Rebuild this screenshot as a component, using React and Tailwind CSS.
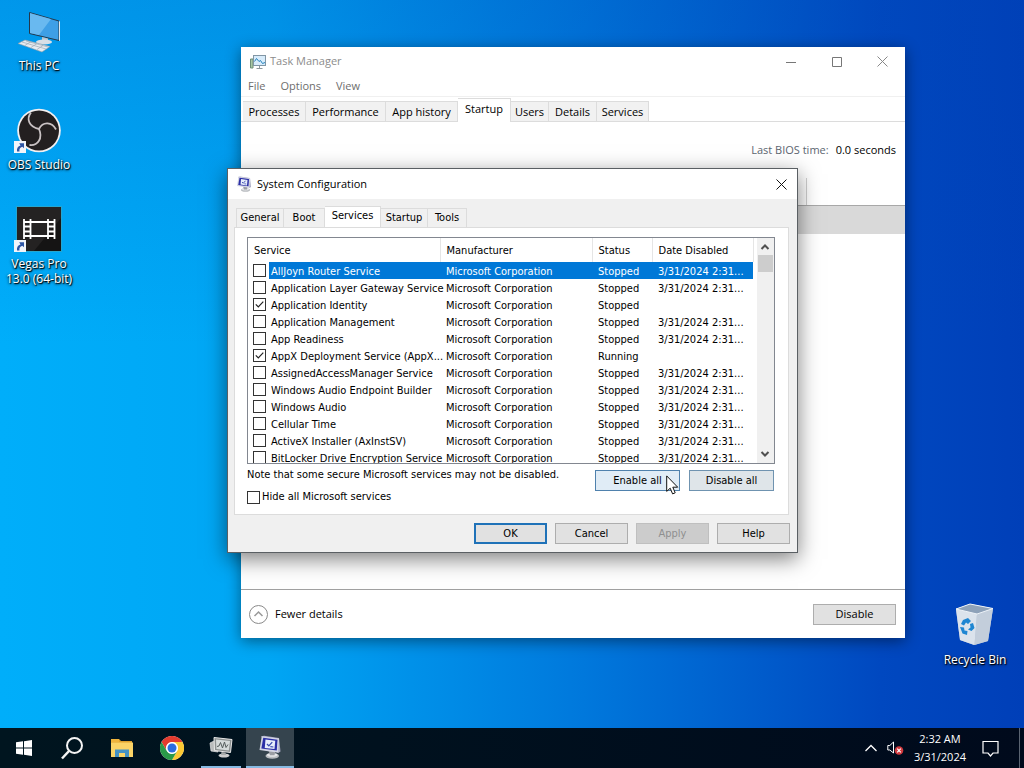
import React from "react";

const services = [
  ["AllJoyn Router Service", "Stopped", true, false],
  ["Application Layer Gateway Service", "Stopped", true, false],
  ["Application Identity", "Stopped", false, true],
  ["Application Management", "Stopped", true, false],
  ["App Readiness", "Stopped", true, false],
  ["AppX Deployment Service (AppX...", "Running", false, true],
  ["AssignedAccessManager Service", "Stopped", true, false],
  ["Windows Audio Endpoint Builder", "Stopped", true, false],
  ["Windows Audio", "Stopped", true, false],
  ["Cellular Time", "Stopped", true, false],
  ["ActiveX Installer (AxInstSV)", "Stopped", true, false],
  ["BitLocker Drive Encryption Service", "Stopped", true, false],
];

function CheckBox({ id, checked = false, label }) {
  return (
    <span className="grid size-[13px] shrink-0">
      <input
        id={id}
        type="checkbox"
        defaultChecked={checked}
        aria-label={label}
        className="peer col-start-1 row-start-1 size-[13px] appearance-none border border-[#333] bg-white"
      />
      <svg
        viewBox="0 0 13 13"
        className="pointer-events-none invisible col-start-1 row-start-1 size-[13px] peer-checked:visible"
        fill="none"
        stroke="#222"
        strokeWidth="1.2"
      >
        <path d="M2.8 6.4 5.3 9 10.3 3.6" />
      </svg>
    </span>
  );
}

function MonitorIcon({ className }) {
  return (
    <svg viewBox="0 0 32 32" className={className}>
      <ellipse cx="19" cy="28" rx="9" ry="3.6" fill="#b9bcc0" />
      <ellipse cx="19" cy="26.500" rx="7" ry="2.4" fill="#e6e7e9" />
      <path d="M14 21l9 1-1 5h-6z" fill="#9a9da3" />
      <path d="M4 2l4-1 20 3 2 18-3 2z" fill="#a9abc4" />
      <path d="M5 1.500l23 3-1 19L2 20z" fill="#d3d5e4" />
      <path d="M7 3.500l19 2.700-1 14.500L4.500 18z" fill="#2b2fa6" />
      <path d="M10 6l13 1.800-1 11-13-1.600z" fill="#e8eefb" />
      <path d="M12 12l2.500 2.500L19 9.500" fill="none" stroke="#3a4bb0" strokeWidth="1.800" />
      <path d="M16.500 15.500l4 .5" stroke="#3a4bb0" strokeWidth="1.500" />
    </svg>
  );
}

function PerfIcon({ className }) {
  return (
    <svg viewBox="0 0 18 16" className={className} fill="none">
      <path d="M1.500 5h2.500v9H1.500z" fill="#a9c7a4" stroke="#6f8f78" />
      <rect x="4.500" y="1.500" width="12" height="10" fill="#d8ecfb" stroke="#8196a5" />
      <path d="M5.500 7.500l2-3 2.500 3 1.500-1 2 3 2.500-1" stroke="#2583bd" />
      <path d="M10.500 12v2M7.500 14.500h6" stroke="#8e979d" />
    </svg>
  );
}

function PerfTaskbarIcon({ className }) {
  return (
    <svg viewBox="0 0 24 24" className={className} fill="none">
      <ellipse cx="15" cy="20.500" rx="5.500" ry="2" fill="#cfcfcf" />
      <path d="M1 8l6-3 2 12-7-1z" fill="#b9bcbc" stroke="#e6e6e6" strokeWidth=".7" />
      <path d="M5 2.500l18 2-1.500 13L5.500 15.500z" fill="#8c9191" stroke="#e9e9e9" />
      <path d="M7 4.500l14 1.600-1.200 9.400L7.400 14z" fill="#d5dada" />
      <path d="M8 11.500l2-.5 1.500-3.500 2 5.500 2-6 1.500 5.500 2-3" stroke="#555d5d" />
      <path d="M12.500 17l4 .4.500 2.600h-5z" fill="#a9acac" />
    </svg>
  );
}

function ShortcutArrow() {
  return (
    <svg viewBox="0 0 12 12" className="absolute bottom-0 -left-0.5 size-3">
      <rect width="12" height="12" fill="#f2f5fa" />
      <path d="M3 10.500C2.500 7 4 5 6.500 4.500L5.200 2.200H10v5L8.300 5.800C6 6.500 5 8 5.500 10.500z" fill="#2d55a5" />
    </svg>
  );
}

function DesktopIcon({ className, label, children }) {
  return (
    <button
      type="button"
      className={
        "absolute flex w-[76px] flex-col items-center gap-1 text-center text-xs leading-[15px] text-white [text-shadow:1px_1px_1px_#000,0_1px_3px_#000] " +
        className
      }
    >
      <span className="relative block">{children}</span>
      <span>{label}</span>
    </button>
  );
}

const tmTabs = [
  ["Processes", "w-[63px]"],
  ["Performance", "w-20"],
  ["App history", "w-[72px]"],
  ["Startup", "w-[53px]"],
  ["Users", "w-[38px]"],
  ["Details", "w-12"],
  ["Services", "w-[52px]"],
];

const scTabs = [
  ["General", "w-12"],
  ["Boot", "w-[41px]"],
  ["Services", "w-14"],
  ["Startup", "w-[47px]"],
  ["Tools", "w-[39px]"],
];

function TaskManager() {
  return (
    <section className="absolute top-[47px] left-[241px] flex h-[591px] w-[664px] flex-col bg-white text-[11px] text-black shadow-[0_3px_14px_rgba(0,0,0,0.45)]">
      <header className="flex h-[29px] items-center pl-2 text-[#8c8c8c]">
        <PerfIcon className="h-4 w-[18px]" />
        <h2 className="ml-[3px] grow">Task Manager</h2>
        <button type="button" aria-label="Minimize" className="grid h-full w-[46px] place-items-center">
          <svg viewBox="0 0 10 10" className="size-[10px]" stroke="#777"><path d="M0 5.500h10" /></svg>
        </button>
        <button type="button" aria-label="Maximize" className="grid h-full w-[45px] place-items-center">
          <svg viewBox="0 0 10 10" className="size-[10px]" fill="none" stroke="#777"><path d="M.5.5h9v9h-9z" /></svg>
        </button>
        <button type="button" aria-label="Close" className="grid h-full w-[46px] place-items-center">
          <svg viewBox="0 0 11 11" className="size-[11px]" stroke="#888"><path d="M.5.5l10 10M10.500.5l-10 10" /></svg>
        </button>
      </header>
      <nav className="flex h-[21px] items-center gap-[15px] border-b border-[#f0f0f0] pl-[7px] text-[#6d6d6d]">
        <button type="button">File</button>
        <button type="button">Options</button>
        <button type="button">View</button>
      </nav>
      <div role="tablist" className="flex h-[25px] items-end border-b border-[#dcdcdc] pl-0.5">
        {tmTabs.map(([name, width]) => (
          <button
            key={name}
            type="button"
            role="tab"
            aria-selected={name === "Startup"}
            className={
              "border-t border-r border-[#dcdcdc] whitespace-nowrap " +
              width +
              (name === "Startup" ? " -mb-px h-6 bg-white pb-0.5" : " h-5 bg-[#f1f1f1] pt-px")
            }
          >
            {name}
          </button>
        ))}
      </div>
      <p className="flex h-14 items-center justify-end gap-[7px] pr-[9px]">
        <span className="text-[#5c6670]">Last BIOS time:</span>
        <span>0.0 seconds</span>
      </p>
      <div className="flex h-7 border-b border-[#a8a8a8]">
        <div className="w-[566px] border-r border-[#d0d0d0]" />
      </div>
      <div className="h-7 bg-[#d9d9d9]" />
      <div className="grow" />
      <footer className="flex h-[49px] items-center border-t border-[#a0a0a0] pr-[9px] pl-2">
        <button type="button" className="flex items-center gap-[7px]">
          <svg viewBox="0 0 19 19" className="size-[19px]" fill="none" stroke="#8a8a8a">
            <circle cx="9.500" cy="9.500" r="9" />
            <path d="M5.500 11l4-4 4 4" stroke="#999" strokeWidth="1.500" />
          </svg>
          Fewer details
        </button>
        <button type="button" className="ml-auto h-[21px] w-[83px] border border-[#adadad] bg-[#e1e1e1]">
          Disable
        </button>
      </footer>
    </section>
  );
}

function SystemConfiguration() {
  return (
    <section className="absolute top-[168px] left-[227px] flex w-[571px] flex-col border border-[#5a5f63] bg-[#f0f0f0] font-['DejaVu_Sans_Condensed','DejaVu_Sans',sans-serif] text-[11px] text-black shadow-[0_6px_20px_rgba(0,0,0,0.5)]">
      <header className="flex h-[30px] items-center bg-white pl-2 font-['Open_Sans','Noto_Sans',sans-serif]">
        <MonitorIcon className="size-4" />
        <h2 className="ml-[5px] grow">System Configuration</h2>
        <button type="button" aria-label="Close" className="grid h-full w-[31px] place-items-center">
          <svg viewBox="0 0 11 11" className="size-[11px]" stroke="#111"><path d="M.5.5l10 10M10.500.5l-10 10" /></svg>
        </button>
      </header>
      <div className="flex flex-col pt-[7px] pr-[7px] pb-2 pl-1.5">
        <div role="tablist" className="flex h-[21px] items-end pl-0.5">
          {scTabs.map(([name, width]) => (
            <button
              key={name}
              type="button"
              role="tab"
              aria-selected={name === "Services"}
              className={
                "border-t border-r border-[#dcdcdc] whitespace-nowrap " +
                width +
                (name === "Services" ? " -mb-px h-[22px] bg-white pb-0.5" : " h-[19px] bg-[#f0f0f0] pt-px first:border-l")
              }
            >
              {name}
            </button>
          ))}
        </div>
        <div className="mr-px border border-[#dcdcdc] bg-white pt-[9px] pr-[13px] pb-[7px] pl-3">
          <div className="flex h-[227px] border border-[#828790]">
            <div className="h-[225px] grow overflow-hidden">
              <table className="w-[505px] table-fixed border-collapse text-left">
                <colgroup>
                  <col className="w-[21px]" />
                  <col className="w-[171px]" />
                  <col className="w-[152px]" />
                  <col className="w-[60px]" />
                  <col className="w-[101px]" />
                </colgroup>
                <thead>
                  <tr className="h-6">
                    <th colSpan={2} className="border-r border-[#e5e5e5] p-0 pt-0.5 pl-1.5 font-normal">Service</th>
                    <th className="border-r border-[#e5e5e5] p-0 pt-0.5 pl-1.5 font-normal">Manufacturer</th>
                    <th className="border-r border-[#e5e5e5] p-0 pt-0.5 pl-1.5 font-normal">Status</th>
                    <th className="border-r border-[#e5e5e5] p-0 pt-0.5 pl-1.5 font-normal">Date Disabled</th>
                  </tr>
                </thead>
                <tbody>
                  {services.map(([name, status, dated, checked], i) => {
                    const fill = i === 0 ? " bg-[#0078d7] text-white" : "";
                    return (
                      <tr key={name} className="h-[17px] leading-[15px] whitespace-nowrap">
                        <td className="p-0 pl-[5px]">
                          <CheckBox label={name} checked={checked} />
                        </td>
                        <td className={"p-0 pt-0.5 pl-0.5" + fill}>{name}</td>
                        <td className={"p-0 pt-0.5 pl-1.5" + fill}>Microsoft Corporation</td>
                        <td className={"p-0 pt-0.5 pl-1.5" + fill}>{status}</td>
                        <td className={"p-0 pt-0.5 pl-1.5" + fill}>{dated ? "3/31/2024 2:31..." : ""}</td>
                      </tr>
                    );
                  })}
                </tbody>
              </table>
            </div>
            <div className="flex w-[17px] flex-col items-center bg-[#f0f0f0]">
              <svg viewBox="0 0 17 17" className="size-[17px]" fill="none" stroke="#505050" strokeWidth="2"><path d="M4.500 11L8 7.500 11.500 11" /></svg>
              <div className="h-[17px] w-[15px] bg-[#cdcdcd]" />
              <svg viewBox="0 0 17 17" className="mt-auto size-[17px]" fill="none" stroke="#505050" strokeWidth="2"><path d="M4.500 6L8 9.500 11.500 6" /></svg>
            </div>
          </div>
          <div className="flex justify-between">
            <div className="flex flex-col">
              <p className="h-[22px] leading-[22px]">Note that some secure Microsoft services may not be disabled.</p>
              <div className="mt-0.5 flex h-[19px] items-center gap-0.5">
                <CheckBox id="hide-ms" />
                <label htmlFor="hide-ms">Hide all Microsoft services</label>
              </div>
            </div>
            <div className="mt-1.5 mr-px flex gap-[9px]">
              <button type="button" className="h-[21px] w-[85px] border border-[#4f81ad] bg-[#e0ecf6] pt-px">Enable all</button>
              <button type="button" className="h-[21px] w-[85px] border border-[#6f93b0] bg-[#dfe5e9] pt-px">Disable all</button>
            </div>
          </div>
        </div>
        <div className="mt-2 flex justify-end gap-2">
          <button type="button" className="h-[21px] w-[73px] border-2 border-[#1f72b8] bg-[#e1e1e1] pt-px">OK</button>
          <button type="button" className="h-[21px] w-[73px] border border-[#adadad] bg-[#e1e1e1] pt-px">Cancel</button>
          <button type="button" disabled className="h-[21px] w-[73px] border border-[#bfbfbf] bg-[#cccccc] pt-px text-[#8f8f8f]">Apply</button>
          <button type="button" className="h-[21px] w-[73px] border border-[#adadad] bg-[#e1e1e1] pt-px">Help</button>
        </div>
      </div>
    </section>
  );
}

function Taskbar() {
  return (
    <footer className="flex h-10 items-stretch bg-linear-to-r from-[#00151f] to-[#000a1c] text-white">
      <button type="button" aria-label="Start" className="grid w-12 place-items-center">
        <svg viewBox="0 0 16 16" className="size-4" fill="#fff">
          <path d="M0 2.300L7 1.300V7.500H0zM8 1.200L16 0V7.500H8zM0 8.500H7V14.700L0 13.700zM8 8.500H16V16L8 14.800z" />
        </svg>
      </button>
      <button type="button" aria-label="Search" className="grid w-12 place-items-center">
        <svg viewBox="0 0 24 24" className="size-6" fill="none" stroke="#f4f4f4" strokeWidth="2">
          <circle cx="14.500" cy="9.500" r="7.500" />
          <path d="M9 15l-7 7.500" strokeWidth="2.500" />
        </svg>
      </button>
      <button type="button" aria-label="File Explorer" className="grid w-[52px] place-items-center">
        <svg viewBox="0 0 22 18" className="h-[18px] w-[22px]">
          <path d="M0 0h8l2 2h11v4H0z" fill="#e0a22e" />
          <path d="M0 3.500h22V18H0z" fill="#fbd467" />
          <path d="M0 0h8v3H0z" fill="#f0b43c" />
          <path d="M4 18v-7.500h14V18h-4v-4H8v4z" fill="#4592c3" />
        </svg>
      </button>
      <button type="button" aria-label="Chrome" className="grid w-12 place-items-center">
        <svg viewBox="0 0 48 48" className="size-6">
          <circle cx="24" cy="24" r="24" fill="#fff" />
          <path d="M24 12H44.800A24 24 0 0 0 3.200 12L13.600 30A12 12 0 0 1 24 12z" fill="#e33b2e" />
          <path d="M34.400 30L24 48A24 24 0 0 0 44.800 12H24A12 12 0 0 1 34.400 30z" fill="#fcc934" />
          <path d="M13.600 30L3.200 12A24 24 0 0 0 24 48L34.400 30A12 12 0 0 1 13.600 30z" fill="#2a9a48" />
          <circle cx="24" cy="24" r="11.500" fill="#fff" />
          <circle cx="24" cy="24" r="9" fill="#2b6de0" />
        </svg>
      </button>
      <button type="button" aria-label="Task Manager" className="mx-[5px] grid w-10 place-items-center border-b-2 border-[#86b9e2]">
        <PerfTaskbarIcon className="size-6" />
      </button>
      <button type="button" aria-label="System Configuration" className="grid w-12 place-items-center border-b-2 border-[#86b9e2] bg-[#35444e]">
        <MonitorIcon className="size-6" />
      </button>
      <div className="ml-auto flex items-center">
        <button type="button" aria-label="Show hidden icons" className="mr-[10px]">
          <svg viewBox="0 0 12 8" className="h-2 w-3" fill="none" stroke="#fff" strokeWidth="1.300"><path d="M.5 7L6 1.500 11.500 7" /></svg>
        </button>
        <button type="button" aria-label="Volume muted" className="mr-2.5">
          <svg viewBox="0 0 17 14" className="h-[14px] w-[17px]" fill="none" stroke="#fff">
            <path d="M.8 4.500h2L6.500 1v11L2.800 9h-2z" />
            <circle cx="12" cy="9.500" r="4.300" fill="#d23a3e" stroke="none" />
            <path d="M10.200 7.700l3.600 3.600M13.800 7.700l-3.600 3.600" strokeWidth="1.200" />
          </svg>
        </button>
        <time className="mr-4 text-center text-[11px] leading-[18px]">
          2:32 AM
          <br />
          3/31/2024
        </time>
        <button type="button" aria-label="Notifications" className="mr-5">
          <svg viewBox="0 0 17 17" className="size-[17px]" fill="none" stroke="#fff" strokeWidth="1.200"><path d="M1 1.500h15v11.500H11L8.500 16 6 13H1z" /></svg>
        </button>
        <span className="mr-1 h-10 w-px bg-[#5a6472]" />
      </div>
    </footer>
  );
}

export default function App() {
  return (
    <div className="flex min-h-screen flex-col bg-[linear-gradient(to_bottom,rgba(0,70,180,0.22),transparent_45%),linear-gradient(to_right,#00aefa_0%,#00a6f4_26%,#0078dc_57%,#0048c0_86%,#003fb8_100%)] font-['Open_Sans','Noto_Sans',sans-serif]">
      <main className="relative grow">
        <DesktopIcon className="top-[11px] left-[1px]" label="This PC">
          <svg viewBox="0 0 44 43" className="h-[43px] w-11">
            <path d="M12.500 1.500L42 10v19.500L12.500 22.500z" fill="#3e9fe6" stroke="#23384c" />
            <path d="M13 2L34 8 22 24 13 22z" fill="#7cc4f3" opacity=".7" />
            <path d="M42 10l1 .5v19l-1 .5z" fill="#dfe8ef" />
            <path d="M25 26l6 1.500v4h-6z" fill="#b8c4cf" />
            <ellipse cx="27" cy="31" rx="8" ry="2.500" fill="#d8dfe6" />
            <path d="M1 32.500L8 29l25 6.500-8 5.500z" fill="#e6ebf0" stroke="#8d9aa5" strokeWidth=".6" />
            <path d="M5 31l24 7M9 30l22 6M8 34.500l6-4M14 36.500l6-4M20 38.500l6-4" stroke="#9eabb6" strokeWidth=".7" />
          </svg>
        </DesktopIcon>
        <DesktopIcon className="top-[108px] left-[1px]" label="OBS Studio">
          <svg viewBox="0 0 46 45" className="h-[45px] w-[46px]">
            <circle cx="23" cy="22.500" r="21.800" fill="#f3f0f1" />
            <circle cx="23" cy="22.500" r="20" fill="#231f20" />
            <g fill="none" stroke="#c9c2c4" strokeWidth="1.800">
              <path d="M23 21C13 19 10 11 15 4.500" />
              <path d="M23 21C27 13 36 14 40 21.500" />
              <path d="M23 21C27 30 22 38 13.500 37" />
            </g>
          </svg>
          <ShortcutArrow />
        </DesktopIcon>
        <DesktopIcon className="top-[206px] left-[1px]" label="Vegas Pro 13.0 (64-bit)">
          <svg viewBox="0 0 46 46" className="h-[46px] w-[46px]">
            <rect width="46" height="46" fill="#26a6cf" />
            <rect x="1" y="1" width="44" height="44" fill="#242222" />
            <path d="M45 12v33H18z" fill="#151414" />
            <g fill="none" stroke="#fff" strokeWidth="1.800">
              <path d="M8 13v20M14.500 13v20M32 13v20M38.500 13v20M14 16h18M14 30h18" />
              <path d="M8 16h6M8 20.500h6M8 25.500h6M8 30h6M32 16h6M32 20.500h6M32 25.500h6M32 30h6" />
            </g>
          </svg>
          <ShortcutArrow />
        </DesktopIcon>
        <DesktopIcon className="top-[602px] right-[11px]" label="Recycle Bin">
          <svg viewBox="0 0 40 46" className="h-[46px] w-10">
            <g transform="translate(0 1)">
              <path d="M1 6L15 1l23 4.500L33 38l-14 4L5 37z" fill="#b8c6d8" />
              <path d="M1 6l21 5-2.500 31L5 37z" fill="#dbe3ec" />
              <path d="M22 11L38 5.500 33 38l-13.500 4z" fill="#c3cedb" />
              <path d="M1 6L15 1l23 4.500L22 11z" fill="#8ea2b9" stroke="#eef3f8" />
              <g fill="#1e86d2">
                <path d="M8 17l5-2 3 3-3 3-2-1.500-2 3-3-1.500z" />
                <path d="M15 21l3-1 1.500 5-3 3-3.500-1.500 2.500-2z" />
                <path d="M5 24l4 .5.500 3 3 .5-.500 4-4.500-1.500z" />
              </g>
            </g>
          </svg>
        </DesktopIcon>
        <TaskManager />
        <SystemConfiguration />
        <svg viewBox="0 0 13 20" className="pointer-events-none absolute top-[475px] left-[666px] h-5 w-[13px]">
          <path d="M.7.9v15.500l3.500-3.200 2.400 5.700 2.600-1.100-2.400-5.600h4.900z" fill="#fff" stroke="#111" />
        </svg>
      </main>
      <Taskbar />
    </div>
  );
}
